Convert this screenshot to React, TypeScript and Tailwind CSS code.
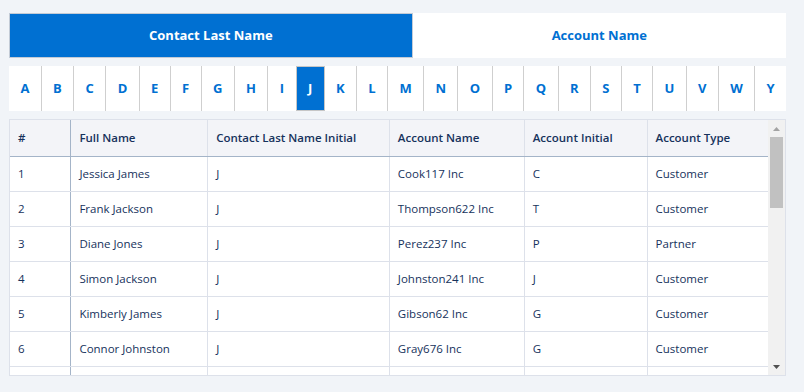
const letters = ["A", "B", "C", "D", "E", "F", "G", "H", "I", "J", "K", "L", "M", "N", "O", "P", "Q", "R", "S", "T", "U", "V", "W", "Y"];

const columns = [
  { label: "#", width: "w-[61px]" },
  { label: "Full Name", width: "w-[137px]" },
  { label: "Contact Last Name Initial", width: "w-[182px]" },
  { label: "Account Name", width: "w-[135px]" },
  { label: "Account Initial", width: "w-[123px]" },
  { label: "Account Type", width: "w-[121px]" },
];

const rows = [
  ["1", "Jessica James", "J", "Cook117 Inc", "C", "Customer"],
  ["2", "Frank Jackson", "J", "Thompson622 Inc", "T", "Customer"],
  ["3", "Diane Jones", "J", "Perez237 Inc", "P", "Partner"],
  ["4", "Simon Jackson", "J", "Johnston241 Inc", "J", "Customer"],
  ["5", "Kimberly James", "J", "Gibson62 Inc", "G", "Customer"],
  ["6", "Connor Johnston", "J", "Gray676 Inc", "G", "Customer"],
  // next row is only peeking in under the fold, text not visible
  ["", "", "", "", "", ""],
];

export default function App() {
  const active = "J";

  return (
    <div className="min-h-[392px] bg-[#f1f4f8] pl-[9px] pt-[13px] font-['Open_Sans',sans-serif]">
      <div className="w-[777px]">
        <div className="flex h-[45px]">
          <button className="flex-auto border border-[#c3cbd6] bg-[#0070d2] text-[13px] font-bold text-white">
            Contact Last Name
          </button>
          <button className="flex-auto bg-white text-[13px] font-bold text-[#0070d2]">Account Name</button>
        </div>

        <div className="mt-[8px] flex h-[45px] bg-white">
          {letters.map((l, i) => (
            <div
              key={l}
              className={
                l === active
                  ? "flex flex-auto items-center justify-center border border-[#c6c6c6] bg-[#0070d2] text-[13px] font-bold text-white"
                  : `flex flex-auto items-center justify-center text-[13px] font-bold text-[#0070d2] ${i > 0 && letters[i - 1] !== active ? "border-l border-[#cfcfcf]" : ""}`
              }
            >
              {l}
            </div>
          ))}
        </div>

        <div className="mt-[8px] flex h-[257px] border border-[#dde1ea] bg-white">
          <div className="w-[758px] overflow-hidden">
            <table className="table-fixed border-collapse text-[11.5px] text-[#16325c]">
              <thead>
                <tr className="h-[36px] bg-[#f3f4f8]">
                  {columns.map((c, i) => (
                    <th
                      key={c.label}
                      className={`${c.width} border-b border-b-[#a4b4c8] px-[8px] text-left font-semibold ${i === 0 ? "border-r border-r-[#a4b4c8]" : i < columns.length - 1 ? "border-r border-r-[#dde1ea]" : ""}`}
                    >
                      {c.label}
                    </th>
                  ))}
                </tr>
              </thead>
              <tbody>
                {rows.map((r, ri) => (
                  <tr key={ri} className="h-[35px]">
                    {r.map((cell, i) => (
                      <td
                        key={i}
                        className={`border-b border-b-[#dde1ea] px-[8px] ${i === 0 ? "border-r border-r-[#a4b4c8]" : i < r.length - 1 ? "border-r border-r-[#dde1ea]" : ""}`}
                      >
                        {cell}
                      </td>
                    ))}
                  </tr>
                ))}
              </tbody>
            </table>
          </div>
          <div className="flex w-[17px] flex-col bg-[#f1f1f1]">
            <div className="flex h-[17px] items-center justify-center">
              <svg width="7" height="4" viewBox="0 0 7 4">
                <path d="M3.5 0 L7 4 L0 4 Z" fill="#a3a3a3" />
              </svg>
            </div>
            <div className="mx-[2px] h-[71px] bg-[#c1c1c1]" />
            <div className="flex-1" />
            <div className="flex h-[17px] items-center justify-center">
              <svg width="7" height="4" viewBox="0 0 7 4">
                <path d="M0 0 L7 0 L3.5 4 Z" fill="#505050" />
              </svg>
            </div>
          </div>
        </div>
      </div>
    </div>
  );
}
